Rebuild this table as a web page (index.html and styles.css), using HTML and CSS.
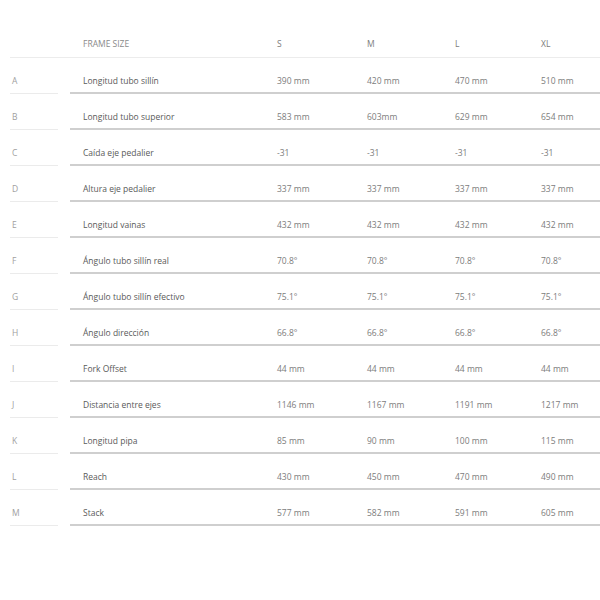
FILE: index.html
```html
<!DOCTYPE html>
<html lang="es">
<head>
<meta charset="utf-8">
<title>Geometría</title>
<link rel="stylesheet" href="styles.css">
</head>
<body>
<div class="geo">
  <div class="head">
    <div class="let"></div>
    <div class="data">
      <span class="lbl">FRAME SIZE</span><span class="v">S</span><span class="v">M</span><span class="v">L</span><span class="v">XL</span>
    </div>
  </div>
  <div class="row"><div class="let">A</div><div class="data"><span class="lbl">Longitud tubo sillín</span><span class="v">390 mm</span><span class="v">420 mm</span><span class="v">470 mm</span><span class="v">510 mm</span></div></div>
  <div class="row"><div class="let">B</div><div class="data"><span class="lbl">Longitud tubo superior</span><span class="v">583 mm</span><span class="v">603mm</span><span class="v">629 mm</span><span class="v">654 mm</span></div></div>
  <div class="row"><div class="let">C</div><div class="data"><span class="lbl">Caída eje pedalier</span><span class="v">-31</span><span class="v">-31</span><span class="v">-31</span><span class="v">-31</span></div></div>
  <div class="row"><div class="let">D</div><div class="data"><span class="lbl">Altura eje pedalier</span><span class="v">337 mm</span><span class="v">337 mm</span><span class="v">337 mm</span><span class="v">337 mm</span></div></div>
  <div class="row"><div class="let">E</div><div class="data"><span class="lbl">Longitud vainas</span><span class="v">432 mm</span><span class="v">432 mm</span><span class="v">432 mm</span><span class="v">432 mm</span></div></div>
  <div class="row"><div class="let">F</div><div class="data"><span class="lbl">Ángulo tubo sillín real</span><span class="v">70.8°</span><span class="v">70.8°</span><span class="v">70.8°</span><span class="v">70.8°</span></div></div>
  <div class="row"><div class="let">G</div><div class="data"><span class="lbl">Ángulo tubo sillín efectivo</span><span class="v">75.1°</span><span class="v">75.1°</span><span class="v">75.1°</span><span class="v">75.1°</span></div></div>
  <div class="row"><div class="let">H</div><div class="data"><span class="lbl">Ángulo dirección</span><span class="v">66.8°</span><span class="v">66.8°</span><span class="v">66.8°</span><span class="v">66.8°</span></div></div>
  <div class="row"><div class="let">I</div><div class="data"><span class="lbl">Fork Offset</span><span class="v">44 mm</span><span class="v">44 mm</span><span class="v">44 mm</span><span class="v">44 mm</span></div></div>
  <div class="row"><div class="let">J</div><div class="data"><span class="lbl">Distancia entre ejes</span><span class="v">1146 mm</span><span class="v">1167 mm</span><span class="v">1191 mm</span><span class="v">1217 mm</span></div></div>
  <div class="row"><div class="let">K</div><div class="data"><span class="lbl">Longitud pipa</span><span class="v">85 mm</span><span class="v">90 mm</span><span class="v">100 mm</span><span class="v">115 mm</span></div></div>
  <div class="row"><div class="let">L</div><div class="data"><span class="lbl">Reach</span><span class="v">430 mm</span><span class="v">450 mm</span><span class="v">470 mm</span><span class="v">490 mm</span></div></div>
  <div class="row"><div class="let">M</div><div class="data"><span class="lbl">Stack</span><span class="v">577 mm</span><span class="v">582 mm</span><span class="v">591 mm</span><span class="v">605 mm</span></div></div>
</div>
</body>
</html>
```
FILE: styles.css
```css
html, body {
  margin: 0;
  padding: 0;
  background: #fff;
}
body {
  font-family: "Open Sans", "DejaVu Sans", sans-serif;
  font-size: 8.5px;
  line-height: 12px;
  color: #5a5a5a;
}
.geo {
  padding: 32px 0 0 10px;
}
.head {
  display: flex;
  border-bottom: 1px solid #ececec;
  padding: 6px 0 7px;
  color: #8a8a8a;
}
.head .let {
  width: 60px;
}
.row {
  display: flex;
  gap: 12px;
}
.row .let {
  width: 48px;
  padding: 17px 0 6px 2px;
  box-sizing: border-box;
  border-bottom: 1px solid #ebebeb;
  color: #a0a0a0;
}
.row .data {
  padding: 17px 0 5px;
  border-bottom: 2px solid #cfcfcf;
}
.data {
  flex: 1;
  display: flex;
}
.lbl {
  width: 194px;
  padding-left: 13px;
}
.v {
  width: 90px;
  color: #7c7c7c;
}
.v:nth-child(3) { width: 88px; }
.v:nth-child(4) { width: 86px; }
.v:nth-child(5) { width: 59px; }
```
